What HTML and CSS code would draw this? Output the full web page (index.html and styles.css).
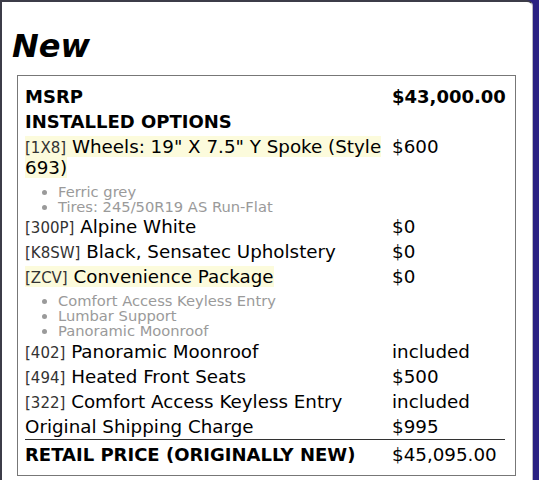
FILE: index.html
```html
<!DOCTYPE html>
<html>
<head>
<meta charset="utf-8">
<link rel="stylesheet" href="styles.css">
</head>
<body>
<div class="card">
  <h1 class="title">New</h1>
  <div class="box">
    <table class="sticker">
      <colgroup><col class="c1"><col class="c2"></colgroup>
      <tr class="row bold"><td>MSRP</td><td>$43,000.00</td></tr>
      <tr class="row bold"><td colspan="2">INSTALLED OPTIONS</td></tr>
      <tr class="row"><td><span class="hl"><span class="code">[1X8]</span> Wheels: 19" X 7.5" Y Spoke (Style 693)</span></td><td>$600</td></tr>
      <tr class="subrow first"><td colspan="2"><ul class="sub"><li>Ferric grey</li><li>Tires: 245/50R19 AS Run-Flat</li></ul></td></tr>
      <tr class="row"><td><span class="code">[300P]</span> Alpine White</td><td>$0</td></tr>
      <tr class="row"><td><span class="code">[K8SW]</span> Black, Sensatec Upholstery</td><td>$0</td></tr>
      <tr class="row"><td><span class="hl"><span class="code">[ZCV]</span> Convenience Package</span></td><td>$0</td></tr>
      <tr class="subrow"><td colspan="2"><ul class="sub"><li>Comfort Access Keyless Entry</li><li>Lumbar Support</li><li>Panoramic Moonroof</li></ul></td></tr>
      <tr class="row"><td><span class="code">[402]</span> Panoramic Moonroof</td><td>included</td></tr>
      <tr class="row"><td><span class="code">[494]</span> Heated Front Seats</td><td>$500</td></tr>
      <tr class="row"><td><span class="code">[322]</span> Comfort Access Keyless Entry</td><td>included</td></tr>
      <tr class="row"><td>Original Shipping Charge</td><td>$995</td></tr>
      <tr class="row total"><td class="bold">RETAIL PRICE (ORIGINALLY NEW)</td><td>$45,095.00</td></tr>
    </table>
  </div>
</div>
</body>
</html>
```
FILE: styles.css
```css
html, body {
  margin: 0;
  padding: 0;
  background: #2a2182;
  overflow: hidden;
  height: 480px;
}
body {
  font-family: "DejaVu Sans", sans-serif;
  color: #000;
}
.card {
  width: 512px;
  margin-right: 15px;
  background: #fff;
  border-top: 2px solid #3c3c48;
  border-left: 2px solid #3c3c48;
  border-right: 1px solid #b8b8c0;
  border-radius: 0 6px 0 0;
  padding: 26px 8px 40px 10px;
  min-height: 500px;
}
.title {
  margin: 0 0 10px 0;
  font-size: 32px;
  line-height: 37px;
  font-weight: bold;
  font-style: italic;
}
.box {
  width: 480px;
  margin-left: 5px;
  border: 1px solid #777;
  padding: 8px 10px 8px 7px;
}
.sticker {
  width: 480px;
  border-collapse: collapse;
  table-layout: fixed;
  font-size: 18.3px;
}
.c1 { width: 367px; }
.c2 { width: 113px; }
.row td {
  padding: 2px 4px 2px 0;
  line-height: 21px;
  vertical-align: top;
}
.row td:last-child { padding-right: 0; }
.bold td, td.bold { font-weight: bold; }
.bold td { font-size: 18px; }
.hl { background: #fcfbdc; }
.code {
  font-size: 15px;
  line-height: 14px;
  color: #333;
}
.subrow td { padding: 4px 0 1px 0; }
.subrow.first td { padding: 4px 0 0 0; }
.sub {
  margin: 0;
  padding: 0 0 0 33px;
  font-size: 14.7px;
  line-height: 15px;
  color: #9a9a9a;
}
.total td {
  border-top: 1px solid #333;
  padding-top: 4px;
}
.total td.bold { font-size: 18px; }
```
